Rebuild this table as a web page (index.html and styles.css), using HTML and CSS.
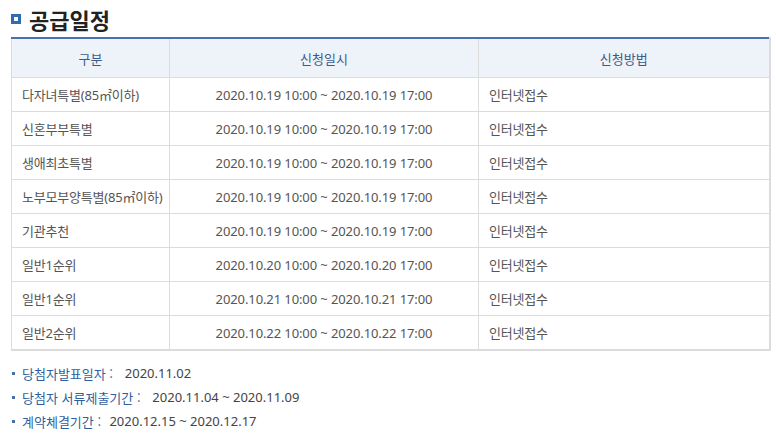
FILE: index.html
```html
<!DOCTYPE html>
<html lang="ko">
<head>
<meta charset="utf-8">
<link rel="stylesheet" href="styles.css">
</head>
<body>
<div class="page">
  <h2 class="title"><span class="title-icon"></span>공급일정</h2>
  <table class="schedule">
    <colgroup>
      <col class="c1"><col class="c2"><col class="c3">
    </colgroup>
    <thead>
      <tr><th>구분</th><th>신청일시</th><th>신청방법</th></tr>
    </thead>
    <tbody>
      <tr><td>다자녀특별(85㎡이하)</td><td class="date">2020.10.19 10:00 ~ 2020.10.19 17:00</td><td>인터넷접수</td></tr>
      <tr><td>신혼부부특별</td><td class="date">2020.10.19 10:00 ~ 2020.10.19 17:00</td><td>인터넷접수</td></tr>
      <tr><td>생애최초특별</td><td class="date">2020.10.19 10:00 ~ 2020.10.19 17:00</td><td>인터넷접수</td></tr>
      <tr><td>노부모부양특별(85㎡이하)</td><td class="date">2020.10.19 10:00 ~ 2020.10.19 17:00</td><td>인터넷접수</td></tr>
      <tr><td>기관추천</td><td class="date">2020.10.19 10:00 ~ 2020.10.19 17:00</td><td>인터넷접수</td></tr>
      <tr><td>일반1순위</td><td class="date">2020.10.20 10:00 ~ 2020.10.20 17:00</td><td>인터넷접수</td></tr>
      <tr><td>일반1순위</td><td class="date">2020.10.21 10:00 ~ 2020.10.21 17:00</td><td>인터넷접수</td></tr>
      <tr><td>일반2순위</td><td class="date">2020.10.22 10:00 ~ 2020.10.22 17:00</td><td>인터넷접수</td></tr>
    </tbody>
  </table>
  <ul class="notes">
    <li><span class="label">당첨자발표일자 :</span>  2020.11.02</li>
    <li><span class="label">당첨자 서류제출기간 :</span>  2020.11.04 ~ 2020.11.09</li>
    <li><span class="label">계약체결기간 :</span> 2020.12.15 ~ 2020.12.17</li>
  </ul>
</div>
</body>
</html>
```
FILE: styles.css
```css
html, body {
  margin: 0;
  padding: 0;
  background: #fff;
}
body {
  font-family: "Noto Sans", "Noto Sans CJK KR", sans-serif;
  color: #555;
}
.page {
  padding: 0 0 0 11px;
  width: 758px;
}
.title {
  margin: 0;
  height: 37px;
  display: flex;
  align-items: center;
  gap: 8px;
  font-family: "Noto Sans CJK KR", sans-serif;
  font-size: 22px;
  font-weight: 700;
  color: #222;
  line-height: 1;
}
.title-icon {
  width: 10px;
  height: 10px;
  box-sizing: border-box;
  border: 3px solid #2f6db3;
  background: #fff;
}
.schedule {
  width: 758px;
  border-collapse: collapse;
  table-layout: fixed;
  border-top: 2px solid #4a70ad;
  border-left: 1px solid #dcdcdc;
  border-right: 2px solid #dcdcdc;
  border-bottom: 2px solid #dcdcdc;
  font-size: 13px;
}
.c1 { width: 158px; }
.c2 { width: 309px; }
.c3 { width: 291px; }
.schedule th {
  height: 38px;
  padding: 0;
  background: #eef3fa;
  color: #3b5b8c;
  font-weight: 400;
  font-size: 13px;
  border-left: 1px solid #dcdcdc;
  border-bottom: 1px solid #dcdcdc;
}
.schedule td {
  height: 33px;
  padding: 0 0 0 10px;
  border: 1px solid #dcdcdc;
  color: #555;
  white-space: nowrap;
  letter-spacing: -0.2px;
}
.schedule td.date {
  text-align: center;
  padding: 0;
  letter-spacing: -0.1px;
}
.notes {
  list-style: none;
  margin: 10px 0 0 0;
  padding: 0;
  font-size: 13px;
  color: #444;
}
.notes li {
  height: 24px;
  display: flex;
  align-items: center;
  position: relative;
  padding-left: 11px;
  white-space: pre;
}
.notes li::before {
  content: "";
  position: absolute;
  left: 1px;
  top: 11px;
  width: 3px;
  height: 3px;
  background: #4b6fa8;
}
.label {
  color: #2f5f9e;
  font-family: "Noto Sans CJK KR", sans-serif;
  margin-right: 5px;
}
```
